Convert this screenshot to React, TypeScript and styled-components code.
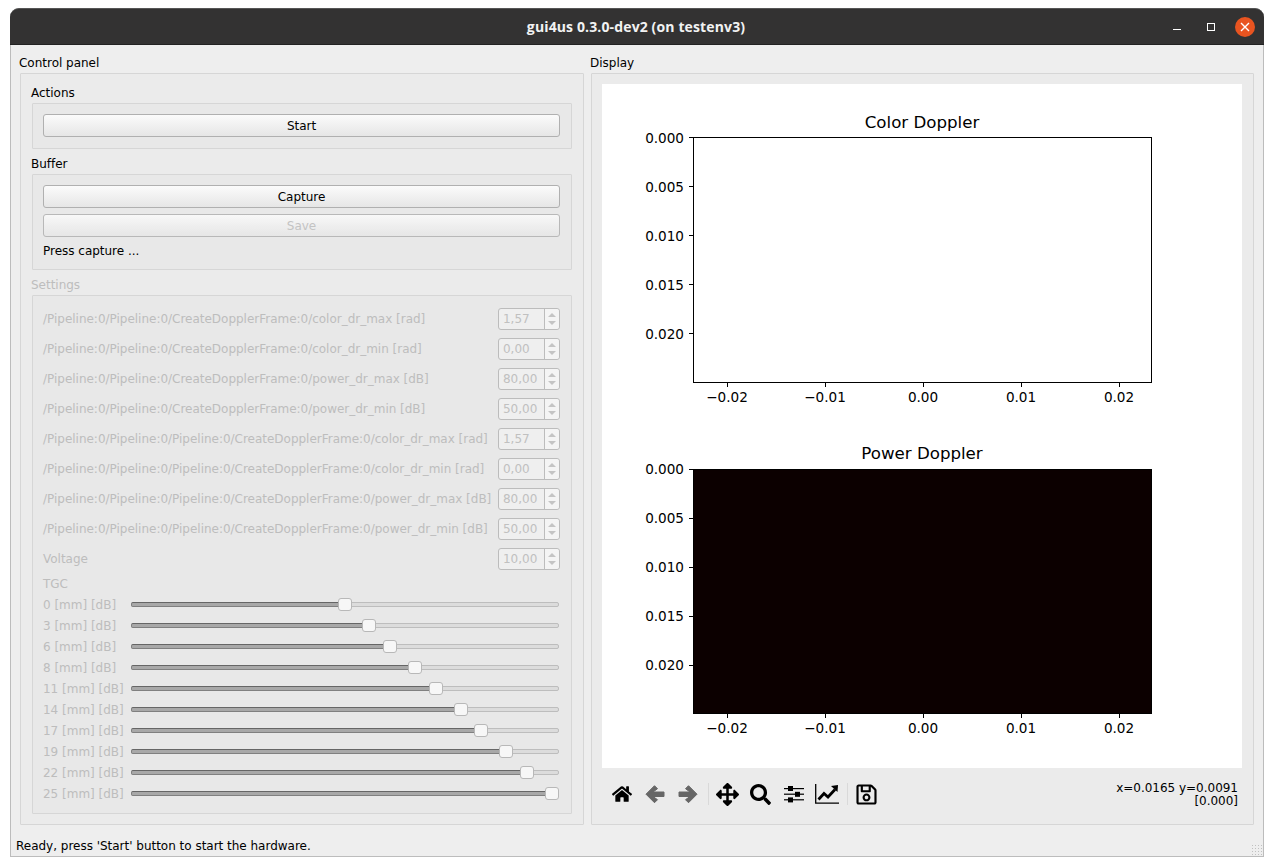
import React from 'react';
import styled, { createGlobalStyle } from 'styled-components';
import { FaHome, FaArrowsAlt, FaSearch, FaRegSave } from 'react-icons/fa';

const GlobalStyle = createGlobalStyle`
  html, body {
    margin: 0;
    padding: 0;
    background: #ffffff;
  }
  body {
    font-family: "DejaVu Sans", sans-serif;
    font-size: 12px;
    letter-spacing: -0.015px;
    color: #000000;
  }
`;

const Window = styled.div`
  width: 1254px;
  height: 849px;
  margin: 8px 0 0 10px;
  box-sizing: border-box;
  display: flex;
  flex-direction: column;
  background: #eeeeee;
  border: 1px solid #bcbcbc;
  border-top: none;
  border-radius: 9px 9px 0 0;
  position: relative;
`;

const TitleBar = styled.div`
  height: 37px;
  margin: 0 -1px;
  flex: none;
  background: #333232;
  border-bottom: 1px solid #222222;
  border-top: 1px solid #555555;
  box-sizing: border-box;
  border-radius: 9px 9px 0 0;
  display: flex;
  align-items: center;
  justify-content: center;
  position: relative;
`;

const Title = styled.div`
  font-family: "Open Sans", sans-serif;
  font-weight: 700;
  font-size: 14px;
  letter-spacing: 0.13px;
  margin-right: 2px;
  color: #f2f2f2;
`;

const WindowButtons = styled.div`
  position: absolute;
  right: 9px;
  top: 0;
  height: 100%;
  display: flex;
  align-items: center;
  gap: 14px;
`;

const WindowButton = styled.div`
  width: 20px;
  height: 20px;
  display: flex;
  align-items: center;
  justify-content: center;
`;

const CloseButton = styled(WindowButton)`
  border-radius: 50%;
  background: #e95420;
`;

const Main = styled.div`
  flex: 1;
  display: flex;
  gap: 6px;
  padding: 9px 9px 0 8px;
  min-height: 0;
`;

const Column = styled.div<{ $width: number }>`
  width: ${p => p.$width}px;
  flex: none;
  display: flex;
  flex-direction: column;
`;

const PanelLabel = styled.div`
  height: 19px;
  line-height: 18px;
  flex: none;
`;

const GroupLabel = styled(PanelLabel)<{ $disabled?: boolean }>`
  margin-left: -1px;
  color: ${p => (p.$disabled ? '#bdbdbd' : '#000000')};
`;

const Frame = styled.div`
  box-sizing: border-box;
  border: 1px solid #d6d6d6;
  border-radius: 1px;
  background: #ebebeb;
`;

const ControlFrame = styled(Frame)`
  height: 752px;
  margin-left: 1px;
  padding: 10px 11px 0 11px;
  display: flex;
  flex-direction: column;
`;

const SubFrame = styled(Frame)`
  padding: 10px 11px 11px 10px;
  margin-bottom: 6px;
  display: flex;
  flex-direction: column;
  gap: 6px;
  background: #e8e8e8;
`;

const Button = styled.div<{ $disabled?: boolean }>`
  height: 23px;
  box-sizing: border-box;
  border: 1px solid #b0b0b0;
  border-radius: 3px;
  background: linear-gradient(#fbfbfb, #e6e6e6);
  display: flex;
  align-items: center;
  justify-content: center;
  color: ${p => (p.$disabled ? '#bdbdbd' : '#000000')};
  opacity: ${p => (p.$disabled ? 0.85 : 1)};
`;

const Hint = styled.div`
  height: 14px;
  line-height: 14px;
  margin-top: 1px;
`;

const SettingsFrame = styled(Frame)`
  flex: none;
  height: 519px;
  padding: 8px 11px 0 10px;
  color: #bdbdbd;
  background: #e8e8e8;
`;

const SpinRow = styled.div`
  height: 30px;
  display: flex;
  align-items: center;
  justify-content: space-between;
`;

const SpinBox = styled.div`
  width: 62px;
  height: 22px;
  box-sizing: border-box;
  border: 1px solid #bcbcbc;
  border-radius: 3px;
  background: #efefef;
  display: flex;
`;

const SpinValue = styled.div`
  flex: 1;
  padding-left: 4px;
  line-height: 20px;
  color: #c0c0c0;
`;

const SpinArrows = styled.div`
  width: 14px;
  border-left: 1px solid #bcbcbc;
  display: flex;
  flex-direction: column;
  align-items: center;
  justify-content: center;
  gap: 4px;
  background: #f4f4f4;
  border-radius: 0 3px 3px 0;
`;

const ArrowUp = styled.div`
  width: 0;
  height: 0;
  border-left: 4px solid transparent;
  border-right: 4px solid transparent;
  border-bottom: 4px solid #c4c4c4;
`;

const ArrowDown = styled.div`
  width: 0;
  height: 0;
  border-left: 4px solid transparent;
  border-right: 4px solid transparent;
  border-top: 4px solid #c4c4c4;
`;

const TgcLabel = styled.div`
  height: 20px;
  line-height: 20px;
`;

const SliderRow = styled.div`
  height: 21px;
  padding-right: 1px;
  display: flex;
  align-items: center;
`;

const SliderLabel = styled.div`
  width: 88px;
  flex: none;
`;

const SliderTrack = styled.div`
  flex: 1;
  height: 5px;
  position: relative;
  box-sizing: border-box;
  border: 1px solid #bdbdbd;
  border-radius: 2px;
  background: #dcdcdc;
`;

const SliderFill = styled.div`
  position: absolute;
  left: -1px;
  top: -1px;
  height: 5px;
  box-sizing: border-box;
  border: 1px solid #808080;
  border-top-color: #666666;
  border-radius: 2px;
  background: #a8a8a8;
`;

const SliderHandle = styled.div`
  position: absolute;
  top: -5px;
  width: 14px;
  height: 13px;
  margin-left: -8px;
  box-sizing: border-box;
  border: 1px solid #b8b8b8;
  border-radius: 3px;
  background: #f7f7f7;
`;

const DisplayFrame = styled(Frame)`
  height: 752px;
  margin-left: 1px;
  padding: 10px 11px 0 10px;
  display: flex;
  flex-direction: column;
`;

const Canvas = styled.div`
  width: 640px;
  height: 684px;
  flex: none;
  background: #ffffff;
`;

const Toolbar = styled.div`
  flex: 1;
  display: flex;
  align-items: center;
  padding: 0 4px 4px 3px;
`;

const ToolButton = styled.div<{ $muted?: boolean }>`
  width: 33px;
  height: 28px;
  display: flex;
  align-items: center;
  justify-content: center;
  color: ${p => (p.$muted ? '#666666' : '#000000')};
`;

const ToolSeparator = styled.div`
  width: 1px;
  height: 22px;
  margin: 0 2px 0 4px;
  background: #d9d9d9;
`;

const Coordinates = styled.div`
  margin-left: auto;
  padding-top: 1px;
  text-align: right;
  line-height: 13px;
`;

const StatusBar = styled.div`
  height: 23px;
  flex: none;
  padding: 1px 0 0 5px;
  line-height: 26px;
`;

const Grip = styled.div`
  position: absolute;
  right: 1px;
  bottom: 1px;
  width: 11px;
  height: 11px;
  background-image: radial-gradient(#c0c0c0 0.7px, transparent 0.8px);
  background-size: 3px 3px;
`;

const spinRows = [
  ['/Pipeline:0/Pipeline:0/CreateDopplerFrame:0/color_dr_max [rad]', '1,57'],
  ['/Pipeline:0/Pipeline:0/CreateDopplerFrame:0/color_dr_min [rad]', '0,00'],
  ['/Pipeline:0/Pipeline:0/CreateDopplerFrame:0/power_dr_max [dB]', '80,00'],
  ['/Pipeline:0/Pipeline:0/CreateDopplerFrame:0/power_dr_min [dB]', '50,00'],
  ['/Pipeline:0/Pipeline:0/Pipeline:0/CreateDopplerFrame:0/color_dr_max [rad]', '1,57'],
  ['/Pipeline:0/Pipeline:0/Pipeline:0/CreateDopplerFrame:0/color_dr_min [rad]', '0,00'],
  ['/Pipeline:0/Pipeline:0/Pipeline:0/CreateDopplerFrame:0/power_dr_max [dB]', '80,00'],
  ['/Pipeline:0/Pipeline:0/Pipeline:0/CreateDopplerFrame:0/power_dr_min [dB]', '50,00'],
  ['Voltage', '10,00'],
];

// handle centre measured from the left end of the track
const sliders: [string, number][] = [
  ['0 [mm] [dB]', 214],
  ['3 [mm] [dB]', 238],
  ['6 [mm] [dB]', 259],
  ['8 [mm] [dB]', 284],
  ['11 [mm] [dB]', 305],
  ['14 [mm] [dB]', 330],
  ['17 [mm] [dB]', 350],
  ['19 [mm] [dB]', 375],
  ['22 [mm] [dB]', 396],
  ['25 [mm] [dB]', 421],
];

const xTicks = [
  ['\u22120.02', 125],
  ['\u22120.01', 223],
  ['0.00', 321],
  ['0.01', 419],
  ['0.02', 517],
] as const;

const yTicks = ['0.000', '0.005', '0.010', '0.015', '0.020'];

// the second plot's top spine sits one pixel lower, its bottom edge does not move
const Axes = ({ top, title, fill, spine = 0 }: { top: number; title: string; fill: string; spine?: number }) => (
  <g>
    <text x={320} y={top - 9} textAnchor="middle" fontSize={16.67} fontFamily="DejaVu Sans" fill="#000">
      {title}
    </text>
    <rect x={91.5} y={top + spine + 0.5} width={458} height={245 - spine} fill={fill} stroke="#000" strokeWidth={1} />
    {yTicks.map((label, i) => {
      const y = top + i * 49;
      return (
        <g key={label}>
          <line x1={87} x2={91} y1={y + spine + 0.5} y2={y + spine + 0.5} stroke="#000" />
          <text x={82} y={y + 6} textAnchor="end" fontSize={13.6} fontFamily="DejaVu Sans" fill="#000">
            {label}
          </text>
        </g>
      );
    })}
    {xTicks.map(([label, x]) => (
      <g key={label}>
        <line x1={x + 0.5} x2={x + 0.5} y1={top + 246} y2={top + 250} stroke="#000" />
        <text x={x} y={top + 265} textAnchor="middle" fontSize={13.6} fontFamily="DejaVu Sans" fill="#000">
          {label}
        </text>
      </g>
    ))}
  </g>
);

const ArrowIcon = ({ flip }: { flip?: boolean }) => (
  <svg width="20" height="20" viewBox="0 0 20 20">
    <g transform={flip ? 'translate(20 0) scale(-1 1)' : undefined}>
      <path
        d="M1 10.2 L9.5 1.7 L12.5 4.7 L8 8 H19 V12.5 H8 L12.5 15.7 L9.5 18.7 Z"
        fill="currentColor"
        stroke="currentColor"
        strokeLinejoin="round"
      />
    </g>
  </svg>
);

const SlidersIcon = () => (
  <svg width="20" height="18" viewBox="0 0 20 18">
    <g fill="#000">
      <rect x="0" y="3" width="20" height="1.2" />
      <rect x="0" y="8.6" width="20" height="1.2" />
      <rect x="0" y="14.2" width="20" height="1.2" />
      <rect x="4" y="1" width="5" height="5" />
      <rect x="11" y="6.8" width="5" height="5" />
      <rect x="4" y="12.4" width="5" height="5" />
    </g>
  </svg>
);

const ChartIcon = () => (
  <svg width="24" height="20" viewBox="0 0 24 20">
    <path d="M0.7 0 V19.2 H24" fill="none" stroke="#000" strokeWidth="1.3" />
    <path d="M3.5 15.5 L9 9.5 L13 13 L20 5.5" fill="none" stroke="#000" strokeWidth="2.8" />
    <path d="M16 2 L23 1 L22.5 8 Z" fill="#000" />
  </svg>
);

const App = () => (
  <>
    <GlobalStyle />
    <Window>
      <TitleBar>
        <Title>gui4us 0.3.0-dev2 (on testenv3)</Title>
        <WindowButtons>
          <WindowButton>
            <svg width="10" height="10" viewBox="0 0 10 10">
              <rect x="1" y="7" width="8" height="1" fill="#fff" />
            </svg>
          </WindowButton>
          <WindowButton>
            <svg width="10" height="10" viewBox="0 0 10 10">
              <rect x="1.5" y="1.5" width="7" height="7" fill="none" stroke="#fff" />
            </svg>
          </WindowButton>
          <CloseButton>
            <svg width="10" height="10" viewBox="0 0 10 10">
              <path d="M1 1 L9 9 M9 1 L1 9" stroke="#fff" strokeWidth="1.4" />
            </svg>
          </CloseButton>
        </WindowButtons>
      </TitleBar>
      <Main>
        <Column $width={565}>
          <PanelLabel>Control panel</PanelLabel>
          <ControlFrame>
            <GroupLabel>Actions</GroupLabel>
            <SubFrame>
              <Button>Start</Button>
            </SubFrame>
            <GroupLabel>Buffer</GroupLabel>
            <SubFrame>
              <Button>Capture</Button>
              <Button $disabled>Save</Button>
              <Hint>Press capture ...</Hint>
            </SubFrame>
            <GroupLabel $disabled>Settings</GroupLabel>
            <SettingsFrame>
              {spinRows.map(([label, value], i) => (
                <SpinRow key={i}>
                  <span>{label}</span>
                  <SpinBox>
                    <SpinValue>{value}</SpinValue>
                    <SpinArrows>
                      <ArrowUp />
                      <ArrowDown />
                    </SpinArrows>
                  </SpinBox>
                </SpinRow>
              ))}
              <TgcLabel>TGC</TgcLabel>
              {sliders.map(([label, pos]) => (
                <SliderRow key={label}>
                  <SliderLabel>{label}</SliderLabel>
                  <SliderTrack>
                    <SliderFill style={{ width: pos }} />
                    <SliderHandle style={{ left: pos }} />
                  </SliderTrack>
                </SliderRow>
              ))}
            </SettingsFrame>
          </ControlFrame>
        </Column>
        <Column $width={664}>
          <PanelLabel>Display</PanelLabel>
          <DisplayFrame>
            <Canvas>
              <svg width="640" height="684" viewBox="0 0 640 684">
                <Axes top={53} title="Color Doppler" fill="#ffffff" />
                <Axes top={384} title="Power Doppler" fill="#0c0000" spine={1} />
              </svg>
            </Canvas>
            <Toolbar>
              <ToolButton><FaHome size={20} /></ToolButton>
              <ToolButton $muted><ArrowIcon /></ToolButton>
              <ToolButton $muted><ArrowIcon flip /></ToolButton>
              <ToolSeparator />
              <ToolButton><FaArrowsAlt size={23} /></ToolButton>
              <ToolButton><FaSearch size={21} /></ToolButton>
              <ToolButton><SlidersIcon /></ToolButton>
              <ToolButton><ChartIcon /></ToolButton>
              <ToolSeparator />
              <ToolButton><FaRegSave size={23} /></ToolButton>
              <Coordinates>
                x=0.0165 y=0.0091
                <br />
                [0.000]
              </Coordinates>
            </Toolbar>
          </DisplayFrame>
        </Column>
      </Main>
      <StatusBar>Ready, press 'Start' button to start the hardware.</StatusBar>
      <Grip />
    </Window>
  </>
);

export default App;
